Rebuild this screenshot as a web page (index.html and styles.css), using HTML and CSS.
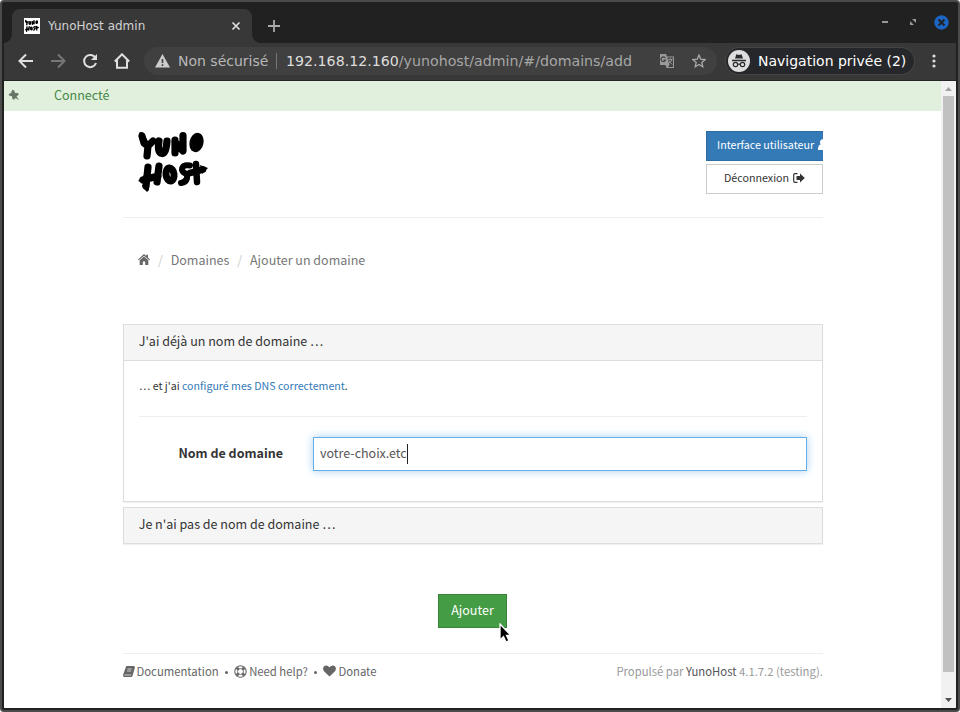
FILE: index.html
```html
<!DOCTYPE html>
<html lang="fr">
<head>
<meta charset="utf-8">
<title>YunoHost admin</title>
<link rel="stylesheet" href="styles.css">
</head>
<body>
<svg class="defs" width="0" height="0">
  <symbol id="logo" viewBox="0 0 70 62">
    <g fill="none" stroke="#000" stroke-linecap="round" stroke-linejoin="round" stroke-width="7.200">
      <path d="M4 5L6 12 10 15 15 10M10 15L9 25"/>
      <path d="M21 10Q19 22 24 22.500 28 23 29 10"/>
      <path d="M37 9L37 22M37 11L45 20 45 4.500"/>
      <ellipse cx="58.500" cy="11.500" rx="3.500" ry="6.200" transform="rotate(12 58.500 11.500)" stroke-width="7"/>
      <path d="M10 36L8 55M21 35L19 51M5 49L20 45"/>
      <ellipse cx="32" cy="43.500" rx="4" ry="6.500" transform="rotate(-8 32 43.500)" stroke-width="7"/>
      <path stroke-width="6" d="M52 34.500Q44 33 44 39 45 42 49 43 50 51 43 52"/>
      <path stroke-width="6.500" d="M58 33L59 51M52 42L65 38.500"/>
    </g>
    <path d="M1 2q3-3 6 3l4 7-4 4-5-7zM0 50l6-6 2 9zM4 54l7-1 0 6-2 2-4-4zM62 34l8 3-6 6z"/>
  </symbol>
</svg>
<div class="window">
  <div class="tabstrip">
    <div class="tab">
      <svg class="favicon" width="16" height="16"><rect width="16" height="16" fill="#fff"/><use href="#logo" x="1" y="1" width="14" height="14"/></svg>
      <span class="tab-title">YunoHost admin</span>
      <svg width="10" height="10" viewBox="0 0 10 10"><path d="M1.500 1.500l7 7M8.500 1.500l-7 7" stroke="#ddd" stroke-width="1.700"/></svg>
    </div>
    <svg class="newtab" width="12" height="12" viewBox="0 0 12 12"><path d="M6 0v12M0 6h12" stroke="#aaa" stroke-width="1.800"/></svg>
    <div class="controls">
      <svg width="8" height="8"><path d="M1 4h6" stroke="#999" stroke-width="2"/></svg>
      <svg width="8" height="8"><path d="M3 1h4v4zM1 3v4h4z" fill="#999"/></svg>
      <svg width="15" height="15" viewBox="0 0 15 15"><circle cx="7.500" cy="7.500" r="7.200" fill="#1b66c4"/><path d="M4.500 4.500l6 6m0-6l-6 6" stroke="#212121" stroke-width="2"/></svg>
    </div>
  </div>
  <div class="toolbar">
    <svg class="nav" width="16" height="16" viewBox="0 0 16 16"><path d="M15 8H2M8 1.500L1.500 8 8 14.500" stroke="#e0e0e0"/></svg>
    <svg class="nav" width="16" height="16" viewBox="0 0 16 16"><path d="M1 8h13M8 1.500L14.500 8 8 14.500" stroke="#777"/></svg>
    <svg class="nav" width="16" height="16" viewBox="0 0 16 16"><path d="M13.500 5A6.100 6.100 0 1 0 14 10" stroke="#e0e0e0"/><path d="M15 1v6H9z" fill="#e0e0e0"/></svg>
    <svg class="nav" width="16" height="16" viewBox="0 0 16 16"><path d="M.8 8.500L8 1.300l7.200 7.200M3 7v7.800h10V7" stroke="#e0e0e0"/></svg>
    <div class="omnibox">
      <svg class="warn" width="15" height="14" viewBox="0 0 15 14"><path d="M7.500 0L15 13.500H0z" fill="#ccc"/><path d="M7.500 5v4M7.500 10.300v1.800" stroke="#404040" stroke-width="1.600"/></svg>
      <span class="insecure">Non sécurisé</span><i class="bar"></i>
      <span class="url"><b>192.168.12.160</b>/yunohost/admin/#/domains/add</span>
      <svg class="translate" width="14" height="14" viewBox="0 0 14 14"><path d="M0 0h6l1 2.500h7V14H6.500l-1-3H0z" fill="#999"/><path d="M7.300 3.500H13V13H8l1.500-2z" fill="#404040"/><path d="M5.300 4A2.300 2.300 0 1 0 5.500 6H3.500" fill="none" stroke="#404040" stroke-width="1.200"/><path d="M8.300 5.500h4.200M10.400 4.500v1M12 5.500q-1 3-3.500 4M9 6.500q1 2 3.200 4" fill="none" stroke="#999"/></svg>
      <svg class="star" width="14" height="14" viewBox="0 0 14 14"><path d="M7 1l1.700 4.100 4.500.4-3.400 2.900 1 4.300L7 10.400l-3.800 2.300 1-4.300L.8 5.500l4.500-.4z" fill="none" stroke="#aaa" stroke-width="1.300"/></svg>
    </div>
    <div class="private">
      <svg width="22" height="22" viewBox="0 0 22 22"><circle cx="11" cy="11" r="11" fill="#ddd"/><path d="M7 8.500l1.400-4.200 2.600.6 2.600-.6L15 8.500z" fill="#292b2e"/><path d="M4 10.500h14" stroke="#292b2e" stroke-width="1.300"/><g fill="none" stroke="#292b2e" stroke-width="1.200"><circle cx="7.500" cy="14.500" r="2.200"/><circle cx="14.500" cy="14.500" r="2.200"/><path d="M9.700 14.500q1.300-1 2.600 0"/></g></svg>
      <span>Navigation privée (2)</span>
    </div>
    <svg class="dots" width="4" height="14" viewBox="0 0 4 14" fill="#ddd"><circle cx="2" cy="2" r="1.600"/><circle cx="2" cy="7" r="1.600"/><circle cx="2" cy="12" r="1.600"/></svg>
  </div>
  <div class="viewport">
    <div class="page">
      <div class="notice">
        <svg width="12" height="12" viewBox="0 0 12 12"><path d="M4.500.5L6.500 2 7 4l3 0 .8 1.500-2.300 2L11 11 7.500 9 6 10.800 4.500 10 4 7.300 1.500 6.800.5 5.200 3 4z" fill="#687568"/></svg>
        <span>Connecté</span>
      </div>
      <div class="container">
        <header>
          <svg class="logo" width="70" height="62"><use href="#logo"/></svg>
          <div class="actions">
            <a class="btn primary"><span>Interface utilisateur</span><svg width="11" height="12" viewBox="0 0 11 12"><circle cx="5" cy="3.200" r="3" fill="#fff"/><path d="M0 11q0-5.500 3-5.700h5q3 .2 3 5.700z" fill="#fff"/></svg></a>
            <a class="btn default"><span>Déconnexion</span><svg width="12" height="10" viewBox="0 0 12 10"><path d="M4.500.7H2Q.7.700.7 2v6q0 1.300 1.300 1.300h2.500" fill="none" stroke="#333" stroke-width="1.200"/><path d="M3.500 3H7V.5L11.800 5 7 9.500V7H3.500z" fill="#333"/></svg></a>
          </div>
        </header>
        <nav class="crumbs">
          <svg width="12" height="11" viewBox="0 0 12 11"><path d="M6 0l2.200 2V.7H10v2.900l2 1.800-.7.800L6 1.700.7 6.200 0 5.400z" fill="#666"/><path d="M6 2.600l4.300 3.600V11H7.200V7.500H4.800V11H1.700V6.200z" fill="#666"/></svg>
          <i>/</i><span>Domaines</span><i>/</i><span>Ajouter un domaine</span>
        </nav>
        <section class="panel">
          <h2>J'ai déjà un nom de domaine …</h2>
          <div class="body">
            <p>… et j'ai <a>configuré mes DNS correctement</a>.</p>
            <div class="field">
              <label>Nom de domaine</label>
              <div class="input"><span>votre-choix.etc</span><i></i></div>
            </div>
          </div>
        </section>
        <section class="panel second"><h2>Je n'ai pas de nom de domaine …</h2></section>
        <div class="submit"><button>Ajouter</button>
          <svg class="cursor" width="14" height="22" viewBox="0 0 14 22"><path d="M2 1v16l3.500-3.500L8 19l3-1.300-2.500-5.200H13z" fill="#000" stroke="#fff" stroke-width="1.300"/></svg>
        </div>
        <footer>
          <svg width="12" height="11" viewBox="0 0 12 11"><path d="M3.300 0H11l1 1-2.500 9-1 1H1Q0 10.500 0 9z" fill="#666"/><path d="M4.500 3h4.200M4 5h4.200M1.500 9h6.700" stroke="#fff" stroke-width=".7" fill="none"/></svg>
          <span>Documentation</span><b><i></i></b>
          <svg width="13" height="13" viewBox="0 0 13 13"><g fill="none" stroke="#666"><circle cx="6.500" cy="6.500" r="5.700" stroke-width="1.100"/><circle cx="6.500" cy="6.500" r="2.900" stroke-width="1"/><path d="M2.800 2.800l1.700 1.700M10.200 2.800L8.500 4.500M2.800 10.200l1.700-1.700M10.200 10.200L8.500 8.500" stroke-width="2.800"/></g></svg>
          <span>Need help?</span><b><i></i></b>
          <svg width="13" height="12" viewBox="0 0 13 12"><path d="M6.500 11.500L1 6.200Q-.8 3.500 1 1.300 3.800-.9 6.500 2.200 9.200-.9 12 1.300q1.800 2.200 0 4.900z" fill="#666"/></svg>
          <span>Donate</span>
          <span class="powered">Propulsé par <em>YunoHost</em> 4.1.7.2 (testing).</span>
        </footer>
      </div>
    </div>
    <div class="scrollbar">
      <svg width="7" height="4"><path d="M0 4L3.500 0 7 4z" fill="#a3a3a3"/></svg>
      <div class="thumb"></div>
      <svg width="7" height="4"><path d="M0 0h7L3.500 4z" fill="#505050"/></svg>
    </div>
  </div>
</div>
</body>
</html>
```

FILE: styles.css
```css
* { box-sizing: border-box; }
body { margin: 0; background: #fff; font-family: "Noto Sans CJK SC", sans-serif; color: #333; }
svg { display: block; flex: none; }
.defs { position: absolute; }
i, em { font-style: normal; }
span { white-space: nowrap; }
.window { width: 960px; height: 712px; border: 2px solid #4b4b4b; border-radius: 4px; background: #212121; overflow: hidden; padding: 0 2px 2px; font-size: 12.500px; }
.tabstrip { height: 41px; display: flex; padding: 7px 9px 0 8px; margin-right: -2px; }
.tab { position: relative; width: 240px; height: 34px; background: #383838; border-radius: 8px 8px 0 0; display: flex; align-items: center; padding: 0 11px 0 12px; font: 12px "DejaVu Sans", sans-serif; color: #d2d2d2; }
.tab::before, .tab::after { content: ""; position: absolute; bottom: 0; width: 8px; height: 8px; }
.tab::before { left: -8px; background: radial-gradient(circle at 0 0, transparent 7.500px, #383838 8px); }
.tab::after { right: -8px; background: radial-gradient(circle at 100% 0, transparent 7.500px, #383838 8px); }
.tab-title { margin-left: 8px; flex: 1; }
.newtab { margin: 11px 0 0 16px; }
.controls { display: flex; align-items: center; margin-left: auto; height: 26px; gap: 20px; }
.controls svg:last-child { margin-left: -3px; }
.toolbar { height: 38px; display: flex; align-items: center; background: #383838; border-bottom: 1px solid #252525; padding: 0 20px 1px 14px; font-family: "DejaVu Sans", sans-serif; }
.nav { margin-right: 16px; fill: none; stroke-width: 2; }
.omnibox { width: 573px; height: 28px; margin-left: -2px; border-radius: 14px; background: #404040; display: flex; align-items: center; padding: 0 11px; font-size: 14.200px; color: #a6a6a6; }
.insecure { margin-left: 8px; width: 91px; font-size: 14px; color: #b8b8b8; }
.bar { width: 1px; height: 16px; background: #777; margin: 0 9px 0 7px; }
.url b { font-weight: normal; color: #dedede; }
.translate { margin-left: auto; }
.star { margin-left: 18px; }
.private { width: 188px; height: 26px; margin-left: 9px; background: #25272a; border-radius: 13px; display: flex; align-items: center; padding-left: 2px; color: #fff; font-size: 14px; box-shadow: 0 0 0 1px #444; }
.private span { margin-left: 8px; }
.dots { margin-left: auto; }
.viewport { display: flex; height: 627px; }
.page { width: 937px; background: #fff; }
.notice { height: 30px; background: #e0f0dc; color: #468847; display: flex; align-items: center; padding: 0 0 3px 4px; }
.notice span { margin-left: 34px; }
.container { width: 700px; margin-left: 119px; }
header { height: 107px; border-bottom: 1px solid #eee; display: flex; padding: 20px 0 0 15px; }
.actions { width: 117px; margin-left: auto; display: flex; flex-direction: column; gap: 3px; font-size: 10.700px; }
.btn { height: 30px; border: 1px solid #ccc; display: flex; align-items: center; overflow: hidden; padding-bottom: 3px; }
.btn svg { margin-left: 4px; }
.primary { background: #337ab7; border-color: #2e6da4; color: #fff; padding-left: 10px; border-right: 0; }
.default { padding-left: 17px; }
.crumbs { height: 106px; display: flex; align-items: center; padding: 0 0 23px 15px; color: #777; }
.crumbs i { width: 20.700px; text-align: center; color: #ccc; }
.panel { border: 1px solid #ddd; box-shadow: 0 1px 1px rgba(0,0,0,.06); height: 178px; }
.second { height: 37px; margin-top: 5px; }
.second h2 { border-bottom: 0; height: 35px; }
h2 { margin: 0; height: 36px; line-height: 32px; padding-left: 14.700px; background: #f5f5f5; border-bottom: 1px solid #ddd; font-size: 12.530px; font-weight: normal; }
.body { padding: 0 15px; }
.body p { margin: 0; height: 56px; line-height: 50px; border-bottom: 1px solid #eee; font-size: 10.630px; }
.body a { color: #337ab7; }
.field { display: flex; margin-top: 20px; }
.field label { width: 144px; text-align: right; font-weight: bold; line-height: 32px; margin-right: 30px; }
.input { flex: 1; height: 34px; border: 1px solid #66afe9; box-shadow: 0 0 8px rgba(102,175,233,.6); padding-left: 6px; color: #555; display: flex; align-items: center; }
.input span { line-height: 20px; padding-bottom: 2px; }
.input i { width: 1px; height: 20px; background: #222; }
.submit { display: flex; justify-content: center; margin-top: 50px; height: 59px; position: relative; }
button { width: 69px; height: 34px; padding: 0 0 3px; margin-right: 1px; font: inherit; color: #fff; background: #449d44; border: 1px solid #398439; }
.cursor { position: absolute; left: 375px; top: 29px; }
footer { display: flex; align-items: center; border-top: 1px solid #eee; height: 37px; padding-bottom: 1.500px; color: #666; font-size: 11.300px; }
footer svg { margin-left: -.5px; }
footer svg + span { margin-left: 2px; }
footer b { width: 16px; display: flex; justify-content: center; }
footer b i { width: 3px; height: 3px; border-radius: 50%; background: #666; margin-top: 2px; }
.powered { margin-left: auto; color: #999; }
.powered em { color: #555; }
.scrollbar { width: 15px; background: #f1f1f1; display: flex; flex-direction: column; align-items: center; padding-top: 6px; }
.thumb { width: 11px; height: 576px; background: #c1c1c1; margin: 5px 0 26px; }
```
